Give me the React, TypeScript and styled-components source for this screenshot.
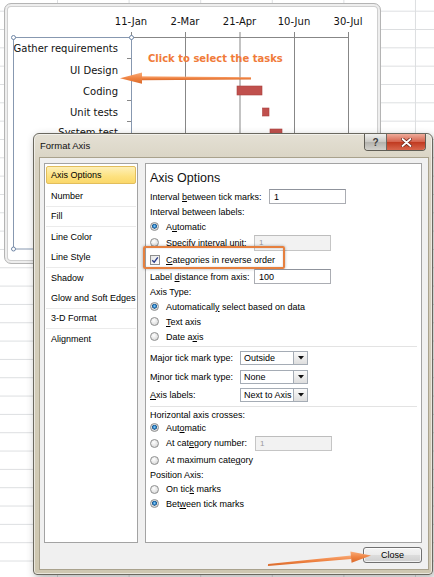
import React from 'react';
import styled, { createGlobalStyle } from 'styled-components';

const GlobalStyle = createGlobalStyle`
  html, body { margin: 0; padding: 0; overflow: hidden; }
  body { font-family: "Liberation Sans", Arial, sans-serif; color: #000; }
`;

const Sheet = styled.div`
  position: relative;
  width: 434px;
  height: 577px;
  overflow: hidden;
  background-color: #fff;
  background-image:
    linear-gradient(to bottom, #dcdee0 1px, transparent 1px),
    linear-gradient(to right, #dcdee0 1px, transparent 1px);
  background-size: 100% 18.33px, 71.6px 100%;
  background-position: 0 10.7px, 57px 0;
`;

/* ---------- chart ---------- */

const ChartFrame = styled.div`
  position: absolute;
  left: 4px;
  top: 3px;
  width: 377px;
  height: 261px;
  box-sizing: border-box;
  border: 1px solid #b4b4b4;
  border-radius: 7px;
  background: #fff;
  box-shadow: inset 0 0 0 2px #eeeeee, inset 0 0 0 3px #cfcfcf;
`;

const ChartSvg = styled.svg`
  display: block;
  font-family: "DejaVu Sans", Verdana, sans-serif;
`;

const dates = [
  { label: '11-Jan', x: 131 },
  { label: '2-Mar', x: 185 },
  { label: '21-Apr', x: 239.5 },
  { label: '10-Jun', x: 294 },
  { label: '30-Jul', x: 348 },
];

const tasks = [
  { name: 'Gather requirements', y: 48 },
  { name: 'UI Design', y: 70 },
  { name: 'Coding', y: 91 },
  { name: 'Unit tests', y: 112 },
  { name: 'System test', y: 132.5 },
];

const bars = [
  { x: 237, y: 86, w: 25, h: 9 },
  { x: 262.5, y: 108, w: 6.5, h: 8 },
  { x: 270, y: 129, w: 12, h: 9 },
];

const minorTicks = [58.5, 79.5, 100.5, 121.5, 142.5, 163.5, 184.5, 205.5, 226.5, 247.5];

const Chart: React.FC = () => (
  <ChartFrame>
    <ChartSvg width={375} height={259} viewBox="5 4 375 259">
      {dates.slice(1).map(d => (
        <line key={d.label} x1={d.x + 0.5} y1={37} x2={d.x + 0.5} y2={264} stroke="#878787" />
      ))}
      <line x1={131} y1={37.5} x2={349} y2={37.5} stroke="#878787" />
      {dates.map(d => (
        <line key={`t${d.label}`} x1={d.x + 0.5} y1={32} x2={d.x + 0.5} y2={37} stroke="#878787" />
      ))}
      {dates.map(d => (
        <text key={`l${d.label}`} x={d.x} y={25} fontSize={10} textAnchor="middle" fill="#111">
          {d.label}
        </text>
      ))}
      <line x1={131.5} y1={37} x2={131.5} y2={264} stroke="#878787" />
      {minorTicks.map(y => (
        <line key={y} x1={127} y1={y} x2={131} y2={y} stroke="#878787" />
      ))}
      {tasks.map(t => (
        <text key={t.name} x={118} y={t.y + 3.6} fontSize={10} textAnchor="end" fill="#111">
          {t.name}
        </text>
      ))}
      {bars.map((b, i) => (
        <rect key={i} x={b.x} y={b.y} width={b.w} height={b.h} fill="#c0504d" stroke="#a9423f" strokeWidth={0.6} />
      ))}
      <rect x={13.5} y={37.5} width={118} height={211.5} fill="none" stroke="#8798b0" />
      {[
        [13.5, 37.5],
        [131.5, 37.5],
        [13.5, 249],
        [131.5, 249],
      ].map(([cx, cy]) => (
        <circle key={`${cx}-${cy}`} cx={cx} cy={cy} r={2} fill="#fff" stroke="#6f86a6" />
      ))}
    </ChartSvg>
  </ChartFrame>
);

/* ---------- annotations ---------- */

const Callout = styled.div`
  position: absolute;
  left: 148px;
  top: 52px;
  font-family: "DejaVu Sans", Verdana, sans-serif;
  font-weight: bold;
  font-size: 10px;
  line-height: 14px;
  color: #f07b3a;
  white-space: nowrap;
`;

const ArrowLayer = styled.svg`
  position: absolute;
  left: 0;
  top: 0;
  pointer-events: none;
  overflow: visible;
`;

const Arrows: React.FC = () => (
  <ArrowLayer width={434} height={577} viewBox="0 0 434 577">
    <defs>
      <linearGradient id="orangeH" x1="0" y1="0" x2="0" y2="1">
        <stop offset="0" stopColor="#f9ab78" />
        <stop offset="0.5" stopColor="#ef8342" />
        <stop offset="1" stopColor="#d9692b" />
      </linearGradient>
    </defs>
    <polygon points="251,77.2 141,76.3 141,80.2 251,79.6" fill="url(#orangeH)" />
    <polygon points="120,78.2 142,72.6 142,83.8" fill="url(#orangeH)" />
    <polygon points="268.1,564 350.9,555.5 351.3,559.1 267.9,566" fill="url(#orangeH)" />
    <polygon points="371,555.4 350.4,551.6 351.6,562.8" fill="url(#orangeH)" />
  </ArrowLayer>
);

/* ---------- dialog ---------- */

const Dialog = styled.div`
  position: absolute;
  left: 33px;
  top: 133px;
  width: 400px;
  height: 442px;
  box-sizing: border-box;
  display: flex;
  flex-direction: column;
  padding: 0 3px 4px 5px;
  border: 1px solid #6a685f;
  border-radius: 6px 6px 4px 4px;
  background: linear-gradient(#e4e0d4, #d8d2c2 30px, #cec7b1 100%);
  box-shadow: inset 0 0 0 1px rgba(255, 255, 255, 0.55), 2px 3px 8px rgba(0, 0, 0, 0.3);
`;

const TitleBar = styled.div`
  height: 23px;
  flex: none;
  display: flex;
  align-items: center;
  padding-left: 1px;
`;

const Title = styled.span`
  flex: 1;
  font-size: 9.5px;
  color: #111;
`;

const WinButtons = styled.div`
  align-self: flex-start;
  display: flex;
  margin-right: 3px;
  border: 1px solid #5f5d55;
  border-top: none;
  border-radius: 0 0 4px 4px;
  overflow: hidden;
  height: 16px;
`;

const HelpButton = styled.div`
  width: 21px;
  display: flex;
  align-items: center;
  justify-content: center;
  background: linear-gradient(#f0f0ee, #c9c8c3 50%, #b3b2ad 51%, #d2d1cc);
  border-right: 1px solid #6b6963;
  font-size: 10px;
  font-weight: bold;
  color: #3d3d3d;
`;

const CloseX = styled.div`
  width: 38px;
  display: flex;
  align-items: center;
  justify-content: center;
  background: linear-gradient(#eeab9a, #d4614b 50%, #c0391f 51%, #d8664c);
`;

const Body = styled.div`
  flex: 1;
  display: flex;
  flex-direction: column;
  border: 1px solid #a9a28d;
  background: #f0f0f0;
  padding: 5px 6px 6px 4px;
`;

const Panes = styled.div`
  height: 380px;
  display: flex;
  gap: 7px;
`;

const CategoryList = styled.div`
  width: 94px;
  flex: none;
  box-sizing: border-box;
  border: 1px solid #a3a3a3;
  background: #fff;
  padding: 2px 1px;
`;

const ListItem = styled.div<{ $selected?: boolean; $sep?: boolean }>`
  box-sizing: border-box;
  height: ${({ $selected }) => ($selected ? '18px' : '20.4px')};
  margin-bottom: ${({ $selected }) => ($selected ? '2.4px' : '0')};
  display: flex;
  align-items: center;
  padding-left: ${({ $selected }) => ($selected ? '4px' : '5px')};
  font-size: 9px;
  white-space: nowrap;
  border: ${({ $selected }) => ($selected ? '1px solid #e2be5c' : 'none')};
  border-bottom: ${({ $selected, $sep }) =>
    $selected ? '1px solid #e2be5c' : $sep ? '1px solid #ebebeb' : 'none'};
  border-radius: ${({ $selected }) => ($selected ? '2px' : '0')};
  background: ${({ $selected }) => ($selected ? 'linear-gradient(#fef0b8, #fde17f 60%, #fbd86a)' : 'transparent')};
`;

const OptionsPane = styled.div`
  flex: 1;
  box-sizing: border-box;
  border: 1px solid #a3a3a3;
  background: #fff;
  padding: 4px 4px 0 4px;
  font-size: 9px;
`;

const Heading = styled.div`
  height: 20px;
  display: flex;
  align-items: center;
  font-size: 12.5px;
  color: #111;
`;

const Row = styled.div<{ $h: number }>`
  position: relative;
  height: ${({ $h }) => $h}px;
  display: flex;
  align-items: center;
  white-space: nowrap;
`;

const FieldLabel = styled.span<{ $w?: number }>`
  flex: none;
  white-space: pre;
  width: ${({ $w }) => ($w ? `${$w}px` : 'auto')};
`;

const TextBox = styled.div<{ $h: number; $disabled?: boolean }>`
  box-sizing: border-box;
  width: 77px;
  height: ${({ $h }) => $h}px;
  display: flex;
  align-items: center;
  padding-left: 4px;
  border: 1px solid ${({ $disabled }) => ($disabled ? '#c5c5c5' : '#abadb3')};
  border-top-color: ${({ $disabled }) => ($disabled ? '#bdbdbd' : '#8f939c')};
  background: ${({ $disabled }) => ($disabled ? '#f2f2f2' : '#fff')};
  color: ${({ $disabled }) => ($disabled ? '#9a9a9a' : '#000')};
  font-size: ${({ $disabled }) => ($disabled ? '8px' : '9px')};
`;

const Select = styled.div`
  box-sizing: border-box;
  width: 68px;
  height: 14px;
  display: flex;
  align-items: center;
  border: 1px solid #a5acb5;
  background: #fff;
`;

const SelectValue = styled.span`
  flex: 1;
  padding-left: 3px;
`;

const DropButton = styled.span`
  width: 14px;
  height: 100%;
  box-sizing: border-box;
  display: flex;
  align-items: center;
  justify-content: center;
  border-left: 1px solid #a5acb5;
  background: linear-gradient(#fafafa, #dedede);
`;

const Radio = styled.span<{ $on?: boolean }>`
  flex: none;
  box-sizing: border-box;
  width: 9px;
  height: 9px;
  margin-right: 7px;
  border-radius: 50%;
  border: 1px solid #8e8f8f;
  background: ${({ $on }) =>
    $on
      ? 'radial-gradient(circle at 50% 45%, #a8dcf8 0, #3b93d6 22%, #195286 44%, #e4e4e4 52%, #c9c9c9 100%)'
      : 'radial-gradient(circle at 40% 35%, #ffffff 0, #e2e2e2 60%, #cbcbcb 100%)'};
`;

const Check = styled.span`
  flex: none;
  box-sizing: border-box;
  width: 10px;
  height: 10px;
  margin-right: 6px;
  display: flex;
  align-items: center;
  justify-content: center;
  border: 1px solid #8e8f8f;
  background: linear-gradient(135deg, #e6e6e6, #ffffff);
`;

const Highlight = styled.span`
  position: absolute;
  left: -7px;
  top: -5px;
  width: 142px;
  height: 23px;
  box-sizing: border-box;
  border: 2px solid #e6803f;
  border-radius: 2px;
  box-shadow: 0 0 3px rgba(0, 0, 0, 0.35), inset 0 0 2px rgba(0, 0, 0, 0.2);
  pointer-events: none;
`;

const Rule = styled.div<{ $h: number }>`
  height: ${({ $h }) => $h}px;
  display: flex;
  align-items: center;

  &::after {
    content: '';
    flex: 1;
    height: 1px;
    background: #e3e3e3;
  }
`;

const Footer = styled.div`
  margin-top: 4px;
  display: flex;
  justify-content: flex-end;
`;

const Button = styled.div`
  box-sizing: border-box;
  width: 59px;
  height: 16px;
  display: flex;
  align-items: center;
  justify-content: center;
  font-size: 9px;
  border: 1px solid #707070;
  border-radius: 3px;
  background: linear-gradient(#f4f4f4, #ebebeb 50%, #dddddd 51%, #cfcfcf);
  box-shadow: inset 0 0 0 1px rgba(255, 255, 255, 0.7);
`;

const DropArrow: React.FC = () => (
  <svg width="6" height="4" viewBox="0 0 6 4">
    <polygon points="0,0 6,0 3,3.5" fill="#111" />
  </svg>
);

const categories = [
  { name: 'Axis Options', selected: true },
  { name: 'Number', sep: true },
  { name: 'Fill', sep: true },
  { name: 'Line Color' },
  { name: 'Line Style', sep: true },
  { name: 'Shadow' },
  { name: 'Glow and Soft Edges', sep: true },
  { name: '3-D Format', sep: true },
  { name: 'Alignment' },
];

const FormatAxisDialog: React.FC = () => (
  <Dialog>
    <TitleBar>
      <Title>Format Axis</Title>
      <WinButtons>
        <HelpButton>?</HelpButton>
        <CloseX>
          <svg width="11" height="9" viewBox="0 0 11 9">
            <path d="M1.5 1 L9.5 8 M9.5 1 L1.5 8" stroke="#6b2418" strokeWidth="3.4" strokeLinecap="round" />
            <path d="M1.5 1 L9.5 8 M9.5 1 L1.5 8" stroke="#fff" strokeWidth="1.8" strokeLinecap="round" />
          </svg>
        </CloseX>
      </WinButtons>
    </TitleBar>

    <Body>
      <Panes>
        <CategoryList>
          {categories.map(c => (
            <ListItem key={c.name} $selected={c.selected} $sep={c.sep}>
              {c.name}
            </ListItem>
          ))}
        </CategoryList>

        <OptionsPane>
          <Heading>Axis Options</Heading>
          <Row $h={17}>
            <FieldLabel $w={119}>Interval <u>b</u>etween tick marks:</FieldLabel>
            <TextBox $h={15}>1</TextBox>
          </Row>
          <Row $h={14}>
            <FieldLabel>Interval between labels:</FieldLabel>
          </Row>
          <Row $h={15}>
            <Radio $on />
            <FieldLabel>A<u>u</u>tomatic</FieldLabel>
          </Row>
          <Row $h={17}>
            <Radio />
            <FieldLabel $w={88}><u>S</u>pecify interval unit:</FieldLabel>
            <TextBox $h={16} $disabled>1</TextBox>
          </Row>
          <Row $h={17}>
            <Check>
              <svg width="8" height="8" viewBox="0 0 8 8">
                <path d="M1.2 4.2 L3.2 6.2 L6.8 1.4" fill="none" stroke="#2b3d8a" strokeWidth="1.4" />
              </svg>
            </Check>
            <FieldLabel><u>C</u>ategories in reverse order</FieldLabel>
            <Highlight />
          </Row>
          <Row $h={17}>
            <FieldLabel $w={104}>Label <u>d</u>istance from axis:</FieldLabel>
            <TextBox $h={15}>100</TextBox>
          </Row>
          <Row $h={14}>
            <FieldLabel>Axis Type:</FieldLabel>
          </Row>
          <Row $h={15}>
            <Radio $on />
            <FieldLabel>Automaticall<u>y</u> select based on data</FieldLabel>
          </Row>
          <Row $h={15}>
            <Radio />
            <FieldLabel><u>T</u>ext axis</FieldLabel>
          </Row>
          <Row $h={15}>
            <Radio />
            <FieldLabel>Date a<u>x</u>is</FieldLabel>
          </Row>
          <Rule $h={5} />
          <Row $h={18}>
            <FieldLabel $w={90}>Ma<u>j</u>or tick mark type:</FieldLabel>
            <Select>
              <SelectValue>Outside</SelectValue>
              <DropButton><DropArrow /></DropButton>
            </Select>
          </Row>
          <Row $h={19}>
            <FieldLabel $w={90}>M<u>i</u>nor tick mark type:</FieldLabel>
            <Select>
              <SelectValue>None</SelectValue>
              <DropButton><DropArrow /></DropButton>
            </Select>
          </Row>
          <Row $h={18}>
            <FieldLabel $w={90}><u>A</u>xis labels:</FieldLabel>
            <Select>
              <SelectValue>Next to Axis</SelectValue>
              <DropButton><DropArrow /></DropButton>
            </Select>
          </Row>
          <Rule $h={4} />
          <Row $h={13}>
            <FieldLabel>Horizontal axis crosses:</FieldLabel>
          </Row>
          <Row $h={13}>
            <Radio $on />
            <FieldLabel>Aut<u>o</u>matic</FieldLabel>
          </Row>
          <Row $h={18}>
            <Radio />
            <FieldLabel $w={89}>At cat<u>e</u>gory number:</FieldLabel>
            <TextBox $h={15} $disabled>1</TextBox>
          </Row>
          <Row $h={16}>
            <Radio />
            <FieldLabel>At maximum cate<u>g</u>ory</FieldLabel>
          </Row>
          <Row $h={14}>
            <FieldLabel>Position Axis:</FieldLabel>
          </Row>
          <Row $h={14}>
            <Radio />
            <FieldLabel>On tic<u>k</u> marks</FieldLabel>
          </Row>
          <Row $h={15}>
            <Radio $on />
            <FieldLabel>Bet<u>w</u>een tick marks</FieldLabel>
          </Row>
        </OptionsPane>
      </Panes>

      <Footer>
        <Button>Close</Button>
      </Footer>
    </Body>
  </Dialog>
);

const App: React.FC = () => (
  <Sheet>
    <GlobalStyle />
    <Chart />
    <Callout>Click to select the tasks</Callout>
    <FormatAxisDialog />
    <Arrows />
  </Sheet>
);

export default App;
